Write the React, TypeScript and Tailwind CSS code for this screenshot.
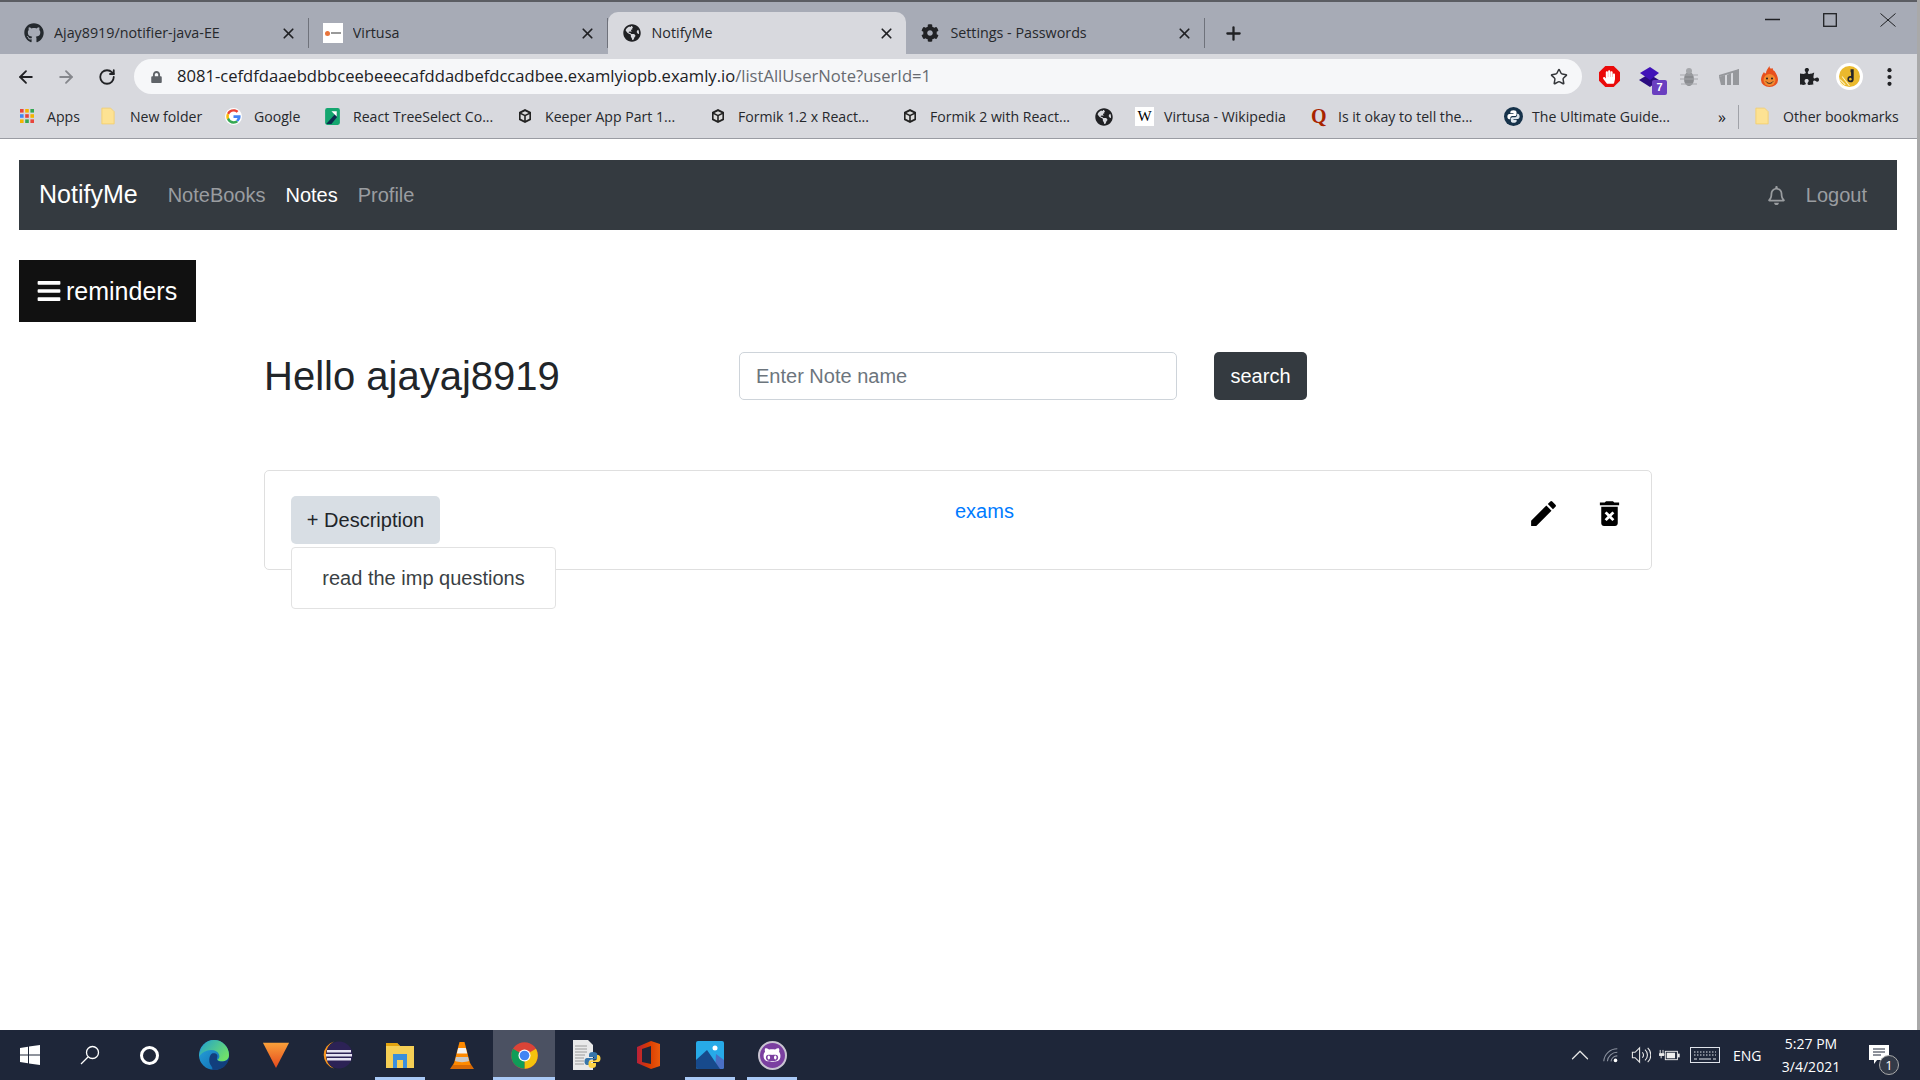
import React from "react";
import { FaGithub, FaGithubAlt, FaCog, FaGlobeAmericas, FaLock, FaPuzzlePiece, FaBars, FaRegBell, FaHandPaper } from "react-icons/fa";
import { MdEdit, MdDeleteForever } from "react-icons/md";
import { ArrowLeft, ArrowRight, RotateCw, Star, X, Plus, ChevronUp } from "lucide-react";

const Box3D = () => (
  <svg viewBox="0 0 16 16" className="w-[16px] h-[16px] shrink-0">
    <path d="M8 1l6 3v8l-6 3-6-3V4z" fill="#222" />
    <path d="M8 3.2l3.6 1.8L8 6.8 4.4 5zM3.600 6.200l3.600 1.800v4.600l-3.600-1.800zM12.400 6.200v4.600l-3.600 1.800V8z" fill="#ddd" />
  </svg>
);
const AppsGrid = () => (
  <svg viewBox="0 0 16 16" className="w-[16px] h-[16px] shrink-0">
    {[0, 1, 2].map((r) =>
      [0, 1, 2].map((c) => (
        <rect key={`${r}${c}`} x={1 + c * 5.2} y={1 + r * 5.2} width="3.6" height="3.6" fill={[["#e8453c", "#f4b400", "#34a853"], ["#4285f4", "#e8453c", "#f4b400"], ["#f4b400", "#34a853", "#e8453c"]][r][c]} />
      ))
    )}
  </svg>
);
const Folder = () => (
  <svg viewBox="0 0 16 20" className="w-[14px] h-[18px] shrink-0">
    <path d="M1 1h10l4 4v14H1z" fill="#fde293" stroke="#f3cf6e" />
  </svg>
);
const GoogleG = () => (
  <svg viewBox="0 0 48 48" className="w-[17px] h-[17px] shrink-0">
    <circle cx="24" cy="24" r="24" fill="#fff" />
    <path fill="#EA4335" d="M24 10c3.600 0 6.600 1.300 9 3.400l5-5C34.700 5.400 29.800 3.500 24 3.500 16 3.500 9 8 5.700 14.700l5.900 4.600C13 14 18 10 24 10z" />
    <path fill="#4285F4" d="M44 24.500c0-1.400-.1-2.500-.3-3.700H24v7.400h11.300c-.5 2.700-2 5-4.300 6.500l5.700 4.400C40.700 35 44 30.300 44 24.500z" />
    <path fill="#FBBC05" d="M11.600 28.700c-.4-1.400-.7-2.900-.7-4.700s.3-3.300.7-4.700l-5.900-4.600C4.500 17.200 3.500 20.500 3.500 24s1 6.800 2.200 9.300z" />
    <path fill="#34A853" d="M24 44.500c5.500 0 10.100-1.800 13-4.900l-5.700-4.400c-1.700 1.100-3.900 1.900-7.300 1.900-6 0-11-4-12.400-9.400l-5.900 4.600C9 39.500 16 44.500 24 44.500z" />
  </svg>
);
const TreeIcon = () => (
  <svg viewBox="0 0 16 18" className="w-[17px] h-[19px] shrink-0">
    <rect x="1" y="1" width="14" height="16" rx="2" fill="#14a66f" />
    <path d="M2 16l10-11v5l-5 6z" fill="#0d2c4f" />
    <path d="M7 4h5v5z" fill="#fff" />
  </svg>
);
const GlobeDark = () => <FaGlobeAmericas className="w-[18px] h-[18px] shrink-0 text-[#202124]" />;
const WikiIcon = () => (
  <span className="w-[19px] h-[19px] bg-white flex items-center justify-center shrink-0 text-[15px] text-black font-['Liberation_Serif',serif]">W</span>
);
const QIcon = () => <span className="ml-[8px] w-[16px] shrink-0 text-[20px] leading-none font-bold text-[#a82400] font-['Liberation_Serif',serif]">Q</span>;
const PyBookmark = () => (
  <svg viewBox="0 0 18 18" className="w-[19px] h-[19px] shrink-0">
    <circle cx="9" cy="9" r="9" fill="#16324a" />
    <path d="M9 3c-2 0-3 .7-3 2v1h3v.7H5C4 6.700 3.200 7.700 3.200 9.300c0 1.500.8 2.400 1.800 2.400h1V10.300c0-1 .8-1.800 1.800-1.800h2.700c.8 0 1.400-.7 1.400-1.500V5c0-1.300-1-2-2.900-2z" fill="#fff" />
    <path d="M9 15c2 0 3-.7 3-2v-1H9v-.7h4c1 0 1.800-1 1.800-2.600 0-1.500-.8-2.400-1.800-2.400h-.6v1.500c0 1-.8 1.800-1.800 1.800H7.900c-.8 0-1.400.7-1.400 1.500V13c0 1.300 1 2 2.500 2z" fill="#dfe7ee" />
  </svg>
);

const tabs = [
  { icon: <FaGithub className="w-[20px] h-[20px] text-[#24292e]" />, title: "Ajay8919/notifier-java-EE" },
  {
    icon: (
      <span className="w-[20px] h-[20px] bg-white flex items-center justify-center">
        <span className="w-[5px] h-[5px] rounded-full bg-[#e8743b]" />
        <span className="w-[10px] h-[2px] bg-[#999] ml-[1px]" />
      </span>
    ),
    title: "Virtusa",
  },
  { icon: <FaGlobeAmericas className="w-[18px] h-[18px] text-[#202124]" />, title: "NotifyMe", active: true },
  { icon: <FaCog className="w-[18px] h-[18px] text-[#202124]" />, title: "Settings - Passwords" },
];

const bookmarks = [
  { w: "w-[82px]", gap: "gap-[12px]", icon: <AppsGrid />, label: "Apps" },
  { w: "w-[124px]", gap: "gap-[15px]", icon: <Folder />, label: "New folder" },
  { w: "w-[99px]", gap: "gap-[12px]", icon: <GoogleG />, label: "Google" },
  { w: "w-[193px]", gap: "gap-[12px]", icon: <TreeIcon />, label: "React TreeSelect Co..." },
  { w: "w-[193px]", gap: "gap-[12px]", icon: <Box3D />, label: "Keeper App Part 1..." },
  { w: "w-[192px]", gap: "gap-[12px]", icon: <Box3D />, label: "Formik 1.2 x React..." },
  { w: "w-[193px]", gap: "gap-[12px]", icon: <Box3D />, label: "Formik 2 with React..." },
  { w: "w-[40px]", gap: "gap-[12px]", icon: <GlobeDark />, label: "" },
  { w: "w-[168px]", gap: "gap-[10px]", icon: <WikiIcon />, label: "Virtusa - Wikipedia" },
  { w: "w-[201px]", gap: "gap-[11px]", icon: <QIcon />, label: "Is it okay to tell the..." },
  { w: "w-[214px]", gap: "gap-[9px]", icon: <PyBookmark />, label: "The Ultimate Guide..." },
];

const TaskSlot = ({ children, bar, active }: { children?: React.ReactNode; bar?: boolean; active?: boolean }) => (
  <div className={`relative h-full w-[62px] flex items-center justify-center ${active ? "bg-[#4b5162]" : ""}`}>
    {children}
    {bar && <span className={`absolute bottom-0 h-[3px] bg-[#a9c9f6] ${active ? "inset-x-0" : "inset-x-[6px]"}`} />}
  </div>
);

const ExtCell = ({ children }: { children: React.ReactNode }) => (
  <div className="w-[40px] h-full flex items-center justify-center">{children}</div>
);

export default function App() {
  const ui = "font-['Open_Sans',sans-serif]";
  return (
    <div className="w-[1920px] h-[1080px] flex flex-col overflow-hidden bg-white font-['Liberation_Sans',sans-serif]">
      <div className="flex-1 min-h-0 flex flex-col border-r-[3px] border-[#a9a9a9]">
        {/* Tab strip */}
        <div className={`h-[54px] shrink-0 bg-[#a7abb6] border-t-2 border-[#5b5d63] flex items-end pl-[10px] ${ui}`}>
          {tabs.map((t) => (
            <div key={t.title} className={`w-[298.800px] h-[42px] flex items-center pl-[14px] pr-[11px] text-[14.300px] text-[#26282c] ${t.active ? "bg-[#d8d9de] rounded-t-[10px]" : "border-r border-[#6f727b] [border-image:linear-gradient(transparent_15%,#6f727b_15%,#6f727b_85%,transparent_85%)_1]"}`}>
              <span className="w-[20px] h-[20px] shrink-0 flex items-center justify-center">{t.icon}</span>
              <span className="ml-[10px] flex-1 truncate">{t.title}</span>
              <X className="w-[17px] h-[17px] text-[#202124]" strokeWidth={2.4} />
            </div>
          ))}
          <div className="h-[42px] flex items-center ml-[18px]">
            <Plus className="w-[21px] h-[21px] text-[#202124]" strokeWidth={2.6} />
          </div>
          <div className="ml-auto self-start mt-[10px] mr-[21px] flex items-center gap-[43px]">
            <svg viewBox="0 0 15 15" className="w-[15px] h-[15px]"><path d="M0 7.500h15" stroke="#202124" strokeWidth="1.500" /></svg>
            <svg viewBox="0 0 14 14" className="w-[14px] h-[14px]"><rect x=".7" y=".7" width="12.600" height="12.600" fill="none" stroke="#202124" strokeWidth="1.300" /></svg>
            <svg viewBox="0 0 16 14" className="w-[16px] h-[14px]"><path d="M.5.500l15 13M15.500.500l-15 13" stroke="#202124" strokeWidth="1" /></svg>
          </div>
        </div>

        {/* Toolbar */}
        <div className="h-[40px] shrink-0 bg-[#d8d9de] flex items-end">
          <div className="w-[134px] h-[35px] flex items-center pl-[16px] text-[#202124] shrink-0">
            <ArrowLeft className="w-[20px] h-[20px]" strokeWidth={2.2} />
            <ArrowRight className="ml-[20px] w-[20px] h-[20px] text-[#85878c]" strokeWidth={2.2} />
            <RotateCw className="ml-[22px] w-[18px] h-[18px]" strokeWidth={2.4} />
          </div>
          <div className={`w-[1448px] h-[35px] bg-[#f6f7f9] rounded-full flex items-center pl-[17px] pr-[14px] shrink-0 ${ui}`}>
            <FaLock className="w-[11px] h-[12px] text-[#5f6368]" />
            <span className="ml-[15px] text-[16.580px] text-[#202124] whitespace-nowrap">
              8081-cefdfdaaebdbbceebeeecafddadbefdccadbee.examlyiopb.examly.io<span className="text-[#676a70]">/listAllUserNote?userId=1</span>
            </span>
            <Star className="ml-auto w-[18px] h-[18px] text-[#34363a]" strokeWidth={2} />
          </div>
          <div className="h-[35px] flex-1 flex items-center pl-[7px]">
            <ExtCell>
              <div className="relative w-[21px] h-[21px] flex items-center justify-center">
                <svg viewBox="0 0 20 20" className="w-[21px] h-[21px]"><path d="M6 0h8l6 6v8l-6 6H6l-6-6V6z" fill="#ea0a0a" /></svg>
                <FaHandPaper className="absolute w-[12px] h-[14px] text-white" />
              </div>
            </ExtCell>
            <ExtCell>
              <div className="relative w-[20px] h-[20px]">
                <svg viewBox="0 0 20 20" className="w-[20px] h-[20px]"><path d="M10 7l10 6-9 7-11-7z" fill="#2b0c80" /><path d="M11 0l9 6-9 7-10-7z" fill="#4012b8" /></svg>
                <span className="absolute -right-[8px] -bottom-[8px] w-[15px] h-[15px] bg-[#6a3fc0] rounded-[2px] text-white text-[11px] font-bold leading-[15px] text-center">7</span>
              </div>
            </ExtCell>
            <ExtCell>
              <svg viewBox="0 0 18 20" className="w-[18px] h-[20px]"><ellipse cx="9" cy="12" rx="5" ry="7" fill="#8a8c90" /><circle cx="9" cy="4" r="3" fill="#a5a7ab" /><path d="M0 8h18M0 12h18M1 17h16" stroke="#a5a7ab" strokeWidth="1.200" /></svg>
            </ExtCell>
            <ExtCell>
              <svg viewBox="0 0 20 16" className="w-[20px] h-[16px]"><path d="M0 8l6-2v10H2zM8 6l4-2v12H8zM14 3l6-3v16h-6z" fill="#96989c" /><path d="M0 6L20 0v2L0 8z" fill="#96989c" /></svg>
            </ExtCell>
            <ExtCell>
              <svg viewBox="0 0 17 21" className="w-[17px] h-[21px]"><path d="M8.500 0c0 3 2 3 3 2 .5 2 1 3 2 3 2 3 3.500 6 3.500 9a8.500 7 0 01-17 0c0-3 1-5 3-8 .5 1 1 2 2 1C5 5 7 2 8.500 0z" fill="#e8501d" /><circle cx="8.500" cy="14" r="6" fill="#f28a30" /><circle cx="6" cy="12.500" r="1" fill="#222" /><circle cx="11" cy="12.500" r="1" fill="#222" /><path d="M5 15.500c2 2.500 5 2.500 7 0" stroke="#222" strokeWidth="1" fill="none" /></svg>
            </ExtCell>
            <ExtCell>
              <FaPuzzlePiece className="w-[19px] h-[19px] text-[#202124]" />
            </ExtCell>
            <ExtCell>
              <div className="w-[27px] h-[27px] rounded-full bg-white flex items-center justify-center">
                <svg viewBox="0 0 20 20" className="w-[21px] h-[21px]"><circle cx="10" cy="10" r="10" fill="#eab92d" /><path d="M1 13L6 18M3 10l7 9M1 16l3 3" stroke="#fff3c2" strokeWidth="1" /><path d="M11 3h3v9.500a3 3 0 11-2.500-3V6h-.5z" fill="#26262a" /><circle cx="10.800" cy="12.500" r="1.200" fill="#eab92d" /></svg>
              </div>
            </ExtCell>
            <ExtCell>
              <svg viewBox="0 0 5 18" className="w-[5px] h-[18px]" fill="#202124"><circle cx="2.500" cy="2.200" r="2.100" /><circle cx="2.500" cy="9" r="2.100" /><circle cx="2.500" cy="15.800" r="2.100" /></svg>
            </ExtCell>
          </div>
        </div>

        {/* Bookmarks */}
        <div className={`h-[45px] shrink-0 bg-[#d8d9de] border-b border-[#9a9ca3] flex items-center pl-[19px] pt-[1px] text-[14.100px] text-[#26282c] ${ui}`}>
          {bookmarks.map((b) => (
            <div key={b.label + b.w} className={`${b.w} ${b.gap} flex items-center shrink-0`}>
              {b.icon}
              {b.label && <span className="whitespace-nowrap">{b.label}</span>}
            </div>
          ))}
          <span className="text-[16px] text-[#202124] w-[20px]">»</span>
          <span className="w-px h-[24px] bg-[#a0a2a8]" />
          <div className="flex items-center gap-[14px] ml-[16px]">
            <Folder />
            <span className="whitespace-nowrap">Other bookmarks</span>
          </div>
        </div>

        {/* Page */}
        <div className="flex-1 min-h-0 relative flex flex-col pt-[21px] pl-[19px] pr-[20px]">
          <nav className="h-[70px] shrink-0 bg-[#343a40] flex items-center pl-[20px] pr-[30px]">
            <span className="text-[25px] text-white">NotifyMe</span>
            <div className="flex items-center gap-[20px] ml-[30px] text-[20px] text-[#9a9da0]">
              <span>NoteBooks</span>
              <span className="text-white">Notes</span>
              <span>Profile</span>
            </div>
            <div className="ml-auto flex items-center gap-[20px] text-[20px] text-[#9a9da0]">
              <FaRegBell className="w-[19px] h-[19px]" />
              <span>Logout</span>
            </div>
          </nav>

          <button className="mt-[30px] w-[177px] h-[62px] bg-[#111111] text-white text-[25px] flex items-center pl-[17px] gap-[4px] shrink-0">
            <FaBars className="w-[26px] h-[26px]" />
            <span className="pt-[1px]">reminders</span>
          </button>

          <div className="ml-[245px] mt-[30px] flex items-center h-[48px] shrink-0">
            <h1 className="w-[475px] text-[40px] text-[#212529]">Hello ajayaj8919</h1>
            <input readOnly placeholder="Enter Note name" className="w-[438px] h-[48px] border border-[#ced4da] rounded-[5px] px-[16px] text-[20px] placeholder:text-[#6c757d] outline-none" />
            <button className="ml-[37px] w-[93px] h-[48px] bg-[#343a40] rounded-[5px] text-white text-[20px]">search</button>
          </div>

          <div className="relative ml-[245px] mt-[70px] w-[1388px] h-[100px] border border-[#dfdfdf] rounded-[5px] flex items-start shrink-0">
            <button className="mt-[25px] ml-[26px] w-[149px] h-[48px] bg-[#d8dee4] rounded-[5px] text-[20px] text-[#212529]">+ Description</button>
            <a className="ml-[515px] mt-[25px] text-[20px] text-[#007bff]">exams</a>
            <MdEdit className="ml-auto mt-[26px] w-[33px] h-[33px] text-black" />
            <MdDeleteForever className="ml-[33px] mr-[25px] mt-[26px] w-[33px] h-[33px] text-black" />
            <div className="absolute left-[26px] top-[76px] w-[265px] h-[62px] bg-white border border-[#e2e2e2] rounded-[4px] flex items-center justify-center text-[20px] text-[#3a3f44]">
              read the imp questions
            </div>
          </div>
        </div>
      </div>

      {/* Taskbar */}
      <div className="h-[50px] shrink-0 bg-[#1e2639] flex items-center">
        <div className="flex items-center h-full w-[183px] pl-[20px] gap-[40px] text-white">
          <svg viewBox="0 0 20 20" className="w-[20px] h-[20px] shrink-0"><path d="M0 3l8-1.200V9.500H0zM9 1.600L20 0v9.500H9zM0 10.500h8v7.700L0 17zM9 10.500h11V20L9 18.400z" fill="#fff" /></svg>
          <svg viewBox="0 0 20 20" className="w-[20px] h-[20px] shrink-0" fill="none" stroke="#fff" strokeWidth="1.300"><circle cx="12.500" cy="7.500" r="6" /><path d="M8 12l-7 7" /></svg>
          <span className="w-[19px] h-[19px] rounded-full border-[3px] border-white shrink-0" />
        </div>
        <TaskSlot>
          <svg viewBox="0 0 30 30" className="w-[30px] h-[30px]">
            <defs>
              <linearGradient id="eb" x1="0" y1="0" x2="1" y2="1"><stop offset="0" stopColor="#2aa8e0" /><stop offset="1" stopColor="#0b62a8" /></linearGradient>
              <linearGradient id="eg" x1="0" y1="0" x2="1" y2=".6"><stop offset="0" stopColor="#1f9fd0" /><stop offset="1" stopColor="#6fe06a" /></linearGradient>
            </defs>
            <circle cx="15" cy="15" r="15" fill="url(#eb)" />
            <path d="M15 0A15 15 0 0130 15c0 4-3 6.500-7 6.500-2 0-4-.6-5-1.500 2-1 3-3 2-5.500-1-3-4-4.500-8-4.500-5 0-10 3-12 7C1 7 7 0 15 0z" fill="url(#eg)" />
            <path d="M13 13.500c4-.8 6.500 1.500 5 4.500-.8 2 2 4 6 3.500 2.500-.3 5-1.500 6-3.500-1 7-7 12-14 12-2 0-3.500-.5-4.500-1 4 0 1-2-.5-5-1.500-4-.5-9 2-10.500z" fill="#123f7d" />
          </svg>
        </TaskSlot>
        <TaskSlot>
          <svg viewBox="0 0 30 30" className="w-[30px] h-[28px]"><defs><linearGradient id="vg" x1="0" y1="0" x2="0" y2="1"><stop offset="0" stopColor="#f9a03a" /><stop offset="1" stopColor="#e6491d" /></linearGradient></defs><path d="M1 2h28L15 29z" fill="url(#vg)" /></svg>
        </TaskSlot>
        <TaskSlot>
          <svg viewBox="0 0 30 30" className="w-[30px] h-[30px]"><circle cx="16" cy="15" r="13.500" fill="#2c2255" /><path d="M11 1.500a14 14 0 000 27A15 15 0 013 15 15 15 0 0111 1.500z" fill="#f7941e" /><rect x="4" y="10" width="24" height="2.500" fill="#e6e4f2" /><rect x="3" y="14" width="26" height="2.500" fill="#e6e4f2" /><rect x="4" y="18" width="24" height="2.500" fill="#e6e4f2" /></svg>
        </TaskSlot>
        <TaskSlot bar>
          <svg viewBox="0 0 28 26" className="w-[28px] h-[26px]"><path d="M0 1h11l3 3h14v22H0z" fill="#f6cf55" /><path d="M0 1h11l3 3H0z" fill="#e2a30f" /><path d="M7 12h14v14h-4v-8h-6v8H7z" fill="#3b8fdc" /></svg>
        </TaskSlot>
        <TaskSlot>
          <svg viewBox="0 0 24 28" className="w-[24px] h-[28px]"><path d="M4 22h16l4 6H0z" fill="#d96a05" /><path d="M9.500 1h5l6 23H3.500z" fill="#ff8a00" /><path d="M8.200 7h7.600l1.400 5.500H6.800z" fill="#f2f2f2" /><path d="M6 16h12l1 4c-4 1.500-10 1.500-14 0z" fill="#c9c9c9" /></svg>
        </TaskSlot>
        <TaskSlot active bar>
          <svg viewBox="0 0 48 48" className="w-[29px] h-[29px]"><circle cx="24" cy="24" r="22" fill="#db4437" /><path d="M24 24L43 13a22 22 0 01-19 33z" fill="#f4c20d" /><path d="M24 24L24 46A22 22 0 015 13z" fill="#0f9d58" /><circle cx="24" cy="24" r="10" fill="#fff" /><circle cx="24" cy="24" r="8" fill="#4285f4" /></svg>
        </TaskSlot>
        <TaskSlot>
          <svg viewBox="0 0 30 30" className="w-[30px] h-[30px]"><path d="M2 0h15l5 5v25H2z" fill="#e9e9ea" /><path d="M4 6h12M4 9h12M4 12h12M4 15h10M4 18h9M4 21h9M4 24h9" stroke="#9a9a9a" strokeWidth="1" /><path d="M22 12c-3 0-4 1-4 3v2h5v1h-7c-1.500 0-2.500 1.500-2.500 3.500S14.500 25 16 25h2v-3c0-1.500 1-2.500 2.500-2.500H24c1.500 0 2.500-1 2.500-2.500v-2c0-2-1.500-3-4.500-3z" fill="#3776ab" /><path d="M21 28c3 0 4-1 4-3v-2h-5v-1h7c1.500 0 2.500-1.500 2.500-3.500S28.500 15 27 15h-1v3c0 1.500-1 2.500-2.500 2.500H20c-1.500 0-2.500 1-2.500 2.500v2c0 2 1 3 3.500 3z" fill="#ffd343" /></svg>
        </TaskSlot>
        <TaskSlot>
          <svg viewBox="0 0 23 28" className="w-[23px] h-[28px]"><defs><linearGradient id="og" x1="0" y1="0" x2="1" y2="0"><stop offset="0" stopColor="#b8203a" /><stop offset=".5" stopColor="#d83b01" /><stop offset="1" stopColor="#ea5a0c" /></linearGradient></defs><path d="M0 6l14-6 9 3v22l-9 3L0 22z" fill="url(#og)" /><path d="M5 8l9-3v18l-9-2z" fill="#1e2639" /></svg>
        </TaskSlot>
        <TaskSlot bar>
          <svg viewBox="0 0 28 28" className="w-[28px] h-[28px]"><defs><clipPath id="pc"><rect width="28" height="28" rx="2" /></clipPath></defs><g clipPath="url(#pc)"><rect width="28" height="28" fill="#27aae8" /><path d="M20 13l8 6v9h-9z" fill="#4a6fc4" /><path d="M0 28V19l11-10 13 19z" fill="#174a8c" /></g><circle cx="19" cy="7" r="2.500" fill="#fff" /></svg>
        </TaskSlot>
        <TaskSlot bar>
          <div className="w-[29px] h-[29px] rounded-full bg-[#7b3fa0] border-[2px] border-[#c9c4d2] flex items-center justify-center">
            <FaGithubAlt className="w-[18px] h-[18px] text-white" />
          </div>
        </TaskSlot>

        <div className="ml-auto flex items-center h-full text-white font-['Open_Sans',sans-serif]">
          <ChevronUp className="w-[30px] h-[30px] text-[#e6e6e6]" strokeWidth={1} />
          <svg viewBox="0 0 20 20" className="ml-[7px] w-[18px] h-[18px]" fill="none" stroke="#8d93a0" strokeWidth="1.200"><path d="M2 17A15 15 0 0117 3M6 17A11 11 0 0117 7M10 17A7 7 0 0117 11" /><circle cx="15" cy="16" r="2" fill="#fff" stroke="none" /></svg>
          <svg viewBox="0 0 22 20" className="ml-[10px] w-[21px] h-[18px]" fill="none" stroke="#e8e8e8" strokeWidth="1.200"><path d="M2 7h3l5-5v16l-5-5H2zM13 7a4 4 0 010 6M16 4a8 8 0 010 12M19 2a11 11 0 010 16" /></svg>
          <svg viewBox="0 0 22 14" className="ml-[8px] w-[21px] h-[13px]"><path d="M1 1v4M4 1v4M0 5h5v2H0zM2 7v3" stroke="#eee" fill="#eee" /><rect x="6.500" y="2.500" width="13" height="9" fill="none" stroke="#eee" /><rect x="8" y="4" width="9" height="6" fill="#eee" /><rect x="20" y="5" width="2" height="4" fill="#eee" /></svg>
          <svg viewBox="0 0 30 16" className="ml-[10px] w-[30px] h-[16px]" fill="none" stroke="#dfe3ea"><rect x=".5" y=".5" width="29" height="15" /><path d="M4 5h22M4 8h22" strokeDasharray="1.500 1.500" /><path d="M4 12h3M9 12h12M23 12h3" /></svg>
          <span className="ml-[13px] text-[14px] w-[32px]">ENG</span>
          <div className="ml-[6px] w-[80px] flex flex-col items-center text-[14px] leading-[23px]">
            <span>5:27 PM</span>
            <span>3/4/2021</span>
          </div>
          <div className="relative ml-[18px] mr-[31px] w-[20px] h-[20px]">
            <svg viewBox="0 0 20 20" className="w-[20px] h-[20px]"><path d="M0 0h20v15H8l-3 4v-4H0z" fill="#fff" /><path d="M4 4h12M4 7h12M4 10h8" stroke="#1e2639" /></svg>
            <span className="absolute -right-[10px] -bottom-[10px] w-[20px] h-[20px] rounded-full bg-[#333a48] border border-[#aaa] text-[13px] leading-[18px] text-center">1</span>
          </div>
        </div>
      </div>
    </div>
  );
}
